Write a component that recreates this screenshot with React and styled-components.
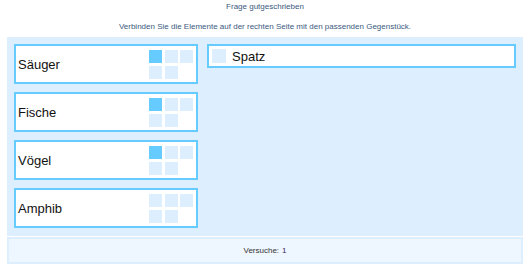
import React from 'react'
import styled, { createGlobalStyle } from 'styled-components'

const GlobalStyle = createGlobalStyle`
  body {
    margin: 0;
    background: #fff;
    font-family: "Liberation Sans", Arial, sans-serif;
  }
`

const categories = [
  { label: 'Säuger', filled: 1 },
  { label: 'Fische', filled: 1 },
  { label: 'Vögel', filled: 1 },
  { label: 'Amphib', filled: 0 },
]

const Page = styled.div`
  padding: 0 7px;
  width: 516px;
`

const Title = styled.div`
  text-align: center;
  font-size: 8px;
  line-height: 14px;
  color: #3b5a80;
`

const Instruction = styled(Title)`
  margin-top: 6px;
  margin-bottom: 3px;
`

const Board = styled.div`
  display: flex;
  gap: 9px;
  background: #ddeeff;
  padding: 7px 7px 8px 7px;
`

const Column = styled.div`
  display: flex;
  flex-direction: column;
  gap: 8px;
  width: ${(p) => (p.$wide ? 'auto' : '184px')};
  flex: ${(p) => (p.$wide ? '1' : 'none')};
`

const Target = styled.div`
  box-sizing: border-box;
  height: 40px;
  background: #fff;
  border: 2px solid #6cf;
  display: flex;
  justify-content: space-between;
  padding: 4px 3px 0 2px;
`

const Label = styled.span`
  font-size: 13px;
  color: #111;
  align-self: center;
  margin-top: -4px;
`

const Slots = styled.div`
  display: grid;
  grid-template-columns: repeat(3, 13px);
  grid-auto-rows: 13px;
  column-gap: 2.5px;
  row-gap: 2.5px;
  align-self: flex-start;
`

const Slot = styled.div`
  background: ${(p) => (p.$on ? '#66ccff' : '#ddeeff')};
`

const Item = styled.div`
  box-sizing: border-box;
  height: 24px;
  background: #fff;
  border: 2px solid #6cf;
  display: flex;
  align-items: center;
  gap: 6px;
  padding-left: 3px;
  font-size: 13px;
  color: #111;
`

const Handle = styled.div`
  width: 14px;
  height: 14px;
  background: #ddeeff;
`

const Footer = styled.div`
  box-sizing: border-box;
  margin-top: 1px;
  height: 27px;
  background: #eef6ff;
  border: 2px solid #ddeeff;
  display: flex;
  align-items: center;
  justify-content: center;
  font-size: 8px;
  color: #333;
`

const Count = styled.span`
  color: #3a1f5c;
  margin-left: 3px;
`

export default function App() {
  return (
    <>
      <GlobalStyle />
      <Page>
        <Title>Frage gutgeschrieben</Title>
        <Instruction>Verbinden Sie die Elemente auf der rechten Seite mit den passenden Gegenstück.</Instruction>
        <Board>
          <Column>
            {categories.map((c) => (
              <Target key={c.label}>
                <Label>{c.label}</Label>
                <Slots>
                  {[0, 1, 2, 3, 4].map((i) => (
                    <Slot key={i} $on={i < c.filled} />
                  ))}
                </Slots>
              </Target>
            ))}
          </Column>
          <Column $wide>
            <Item>
              <Handle />
              Spatz
            </Item>
          </Column>
        </Board>
        <Footer>
          Versuche:<Count>1</Count>
        </Footer>
      </Page>
    </>
  )
}
